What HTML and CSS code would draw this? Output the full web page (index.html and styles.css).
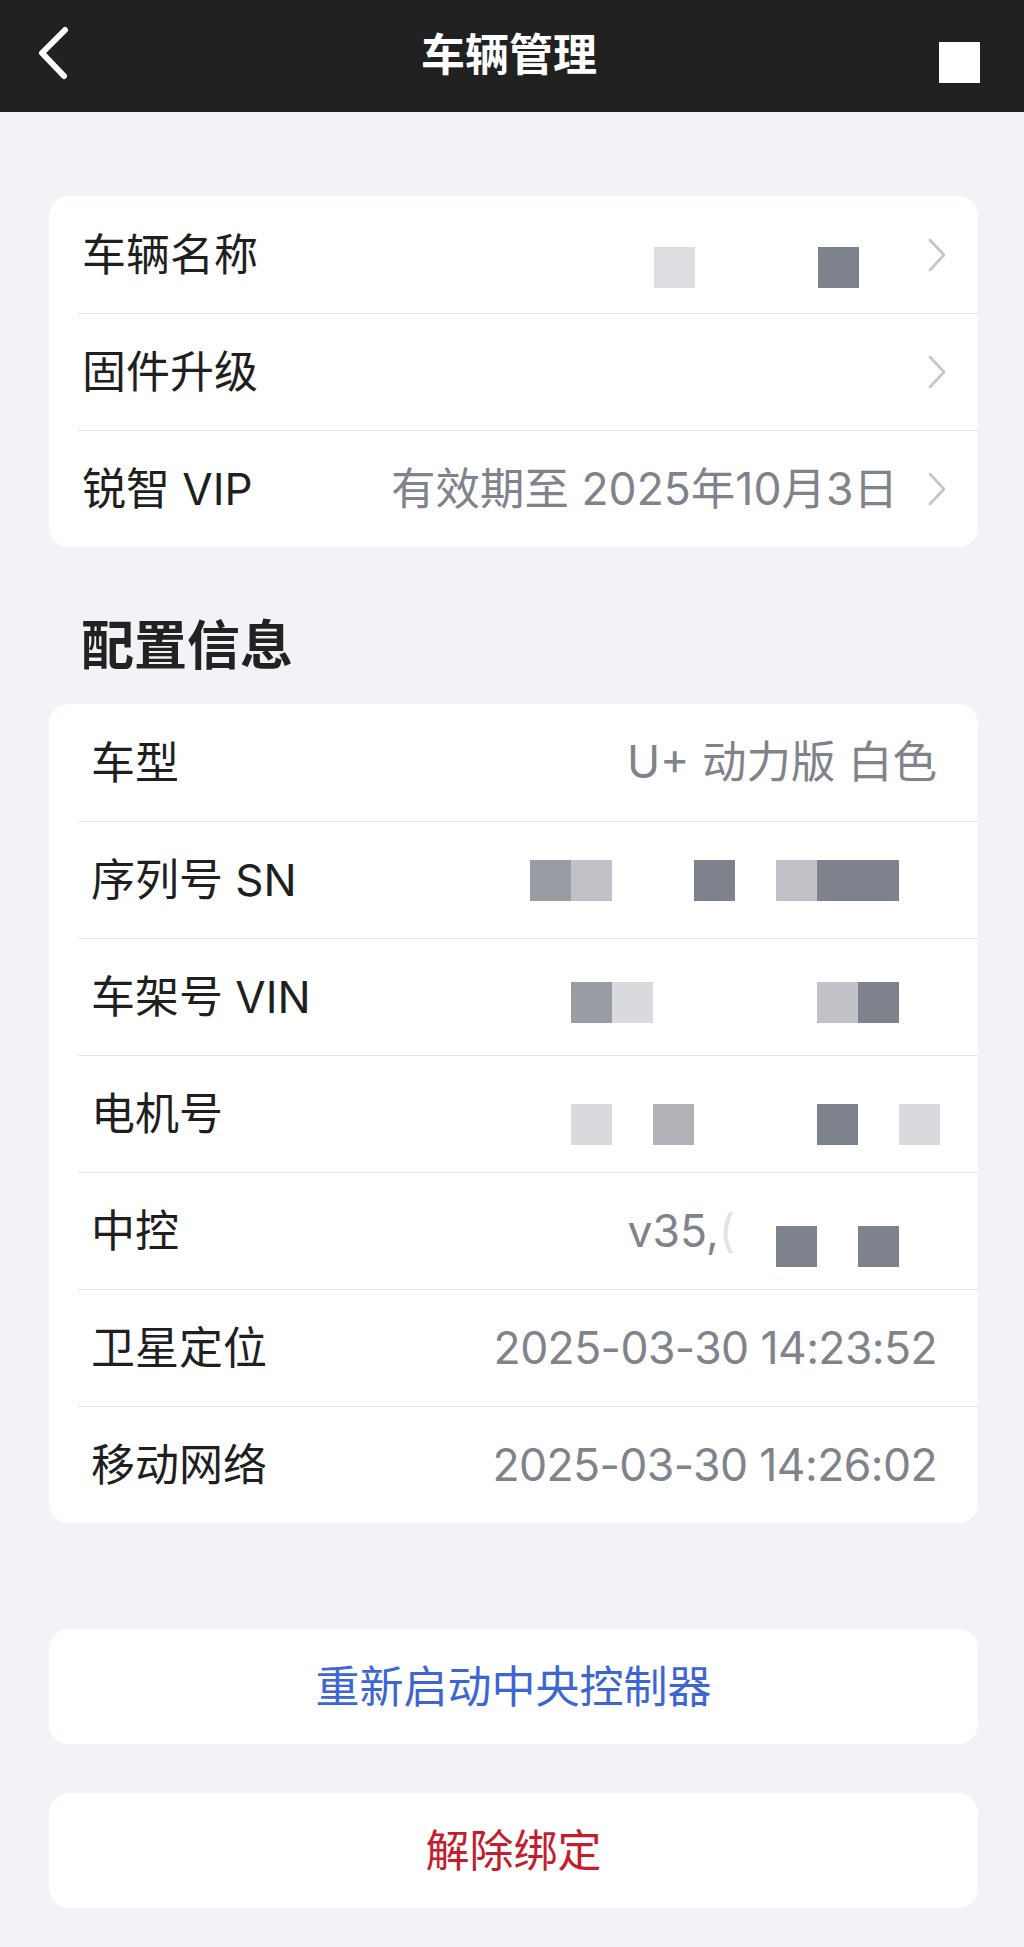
FILE: index.html
```html
<!DOCTYPE html>
<html lang="zh-CN">
<head>
  <meta charset="UTF-8" />
  <meta name="viewport" content="width=device-width, initial-scale=1.0" />
  <title>车辆管理</title>
  <link rel="stylesheet" href="styles.css">
</head>
<body>
  <header class="topbar">
    <a class="back" href="#" aria-label="返回">
      <svg width="40" height="60" viewBox="0 0 40 60">
        <path d="M27 4 L4 27 L26 50" fill="none" stroke="#fff" stroke-width="6" stroke-linecap="round" stroke-linejoin="round"/>
      </svg>
    </a>
    <h1>车辆管理</h1>
    <div class="square"></div>
  </header>

  <main>
    <!-- Vehicle settings -->
    <section class="card">
      <div class="row">
        <span class="label">车辆名称</span>
        <div class="mosaic mosaic-name">
          <i class="c3"></i><i></i><i></i><i></i><i class="c5"></i>
        </div>
        <svg class="chev" width="20" height="36" viewBox="0 0 20 36"><path d="M3 3 L17 18 L3 33" /></svg>
      </div>
      <div class="row">
        <span class="label">固件升级</span>
        <svg class="chev" width="20" height="36" viewBox="0 0 20 36"><path d="M3 3 L17 18 L3 33" /></svg>
      </div>
      <div class="row">
        <span class="label">锐智 VIP</span>
        <span class="value">有效期至 2025年10月3日</span>
        <svg class="chev" width="20" height="36" viewBox="0 0 20 36"><path d="M3 3 L17 18 L3 33" /></svg>
      </div>
    </section>

    <h2 class="section-title">配置信息</h2>

    <!-- Config info -->
    <section class="card info">
      <div class="row">
        <span class="label">车型</span>
        <span class="value">U+ 动力版 白色</span>
      </div>
      <div class="row">
        <span class="label">序列号 SN</span>
        <div class="mosaic">
          <i class="c4"></i><i class="c2"></i><i></i><i></i><i class="c5"></i><i></i><i class="c2"></i><i class="c5"></i><i class="c5"></i><i></i>
        </div>
      </div>
      <div class="row">
        <span class="label">车架号 VIN</span>
        <div class="mosaic shift-s">
          <i class="c4"></i><i class="c1"></i><i></i><i></i><i></i><i></i><i class="c2"></i><i class="c5"></i><i></i>
        </div>
      </div>
      <div class="row">
        <span class="label">电机号</span>
        <div class="mosaic shift-m">
          <i class="c1"></i><i></i><i class="c3"></i><i></i><i></i><i></i><i class="c5"></i><i></i><i class="c1"></i>
        </div>
      </div>
      <div class="row">
        <span class="label">中控</span>
        <span class="value">v35,<span class="faded">(</span></span>
        <div class="mosaic mosaic-short shift-l">
          <i></i><i class="c5"></i><i></i><i class="c5"></i><i></i>
        </div>
      </div>
      <div class="row">
        <span class="label">卫星定位</span>
        <span class="value time">2025-03-30 14:23:52</span>
      </div>
      <div class="row">
        <span class="label">移动网络</span>
        <span class="value time">2025-03-30 14:26:02</span>
      </div>
    </section>

    <button class="action restart" type="button">重新启动中央控制器</button>
    <button class="action unbind" type="button">解除绑定</button>
  </main>
</body>
</html>
```

FILE: styles.css
```css
/* Reset and base styles */
* {
  box-sizing: border-box;
  margin: 0;
  padding: 0;
}
body {
  font-family: Inter, "Noto Sans CJK SC", sans-serif;
  background-color: #f2f3f7;
  color: #1f1f1f;
  width: 1024px;
  min-height: 1947px;
}

/* Top bar */
.topbar {
  height: 112px;
  background-color: #212121;
  display: grid;
  grid-template-columns: 1fr auto 1fr;
  align-items: center;
  padding: 0 44px 0 38px;
}
.back {
  display: flex;
  align-items: center;
}
.topbar h1 {
  color: #fff;
  font-size: 44px;
  font-weight: 700;
  line-height: 1;
  padding-bottom: 2px;
}
.square {
  justify-self: end;
  width: 41px;
  height: 41px;
  background: #fff;
  margin-top: 12px;
}

/* Main content */
main {
  padding: 84px 46px 0 49px;
}

.card {
  background: #fff;
  border-radius: 20px;
  overflow: hidden;
}

.row {
  height: 117px;
  margin-left: 29px;
  padding: 0 31px 0 4px;
  display: flex;
  align-items: center;
  border-top: 1px solid #e3e3e6;
}
.row:first-child {
  border-top: none;
}
.info .row {
  padding: 0 41px 0 13px;
}

.label {
  font-size: 44px;
  line-height: 1;
  white-space: nowrap;
}
.value {
  margin-left: auto;
  font-size: 44.5px;
  line-height: 1;
  color: #80838b;
  white-space: nowrap;
}
.value.time {
  letter-spacing: -0.6px;
}
.value .faded {
  color: #e2e3e6;
}

.chev {
  flex: none;
  margin-left: 29px;
}
.chev path {
  fill: none;
  stroke: #c5c5c8;
  stroke-width: 2.6;
  stroke-linecap: round;
  stroke-linejoin: round;
}
.row .label + .chev {
  margin-left: auto;
}

/* Hidden (pixelated) values */
.mosaic {
  margin-left: auto;
  margin-right: -3px;
  display: flex;
}
.mosaic i {
  display: block;
  width: 41px;
  height: 41px;
}
.mosaic .c1 { background: #d9dadd; }
.mosaic .c2 { background: #c1c2c7; }
.mosaic .c3 { background: #b0b2b8; }
.mosaic .c4 { background: #9a9ca4; }
.mosaic .c5 { background: #7e828c; }
.mosaic-name {
  margin-right: 39px;
  margin-top: 26px;
}
.mosaic-name .c3 { background: #dcdde1; }
.mosaic-short {
  margin-left: 0;
}
.shift-s { margin-top: 10px; }
.shift-m { margin-top: 20px; }
.shift-l { margin-top: 30px; }

/* Section heading */
.section-title {
  font-size: 53px;
  font-weight: 700;
  line-height: 64px;
  color: #222;
  padding-left: 32px;
  margin: 67px 0 26px;
}

/* Action buttons */
.action {
  display: block;
  width: 100%;
  height: 115px;
  background: #fff;
  border: none;
  border-radius: 20px;
  font-family: inherit;
  font-size: 44px;
  line-height: 1;
  cursor: pointer;
}
.restart {
  margin-top: 106px;
  color: #3d66d4;
}
.unbind {
  margin-top: 49px;
  color: #c41d2d;
}
```
